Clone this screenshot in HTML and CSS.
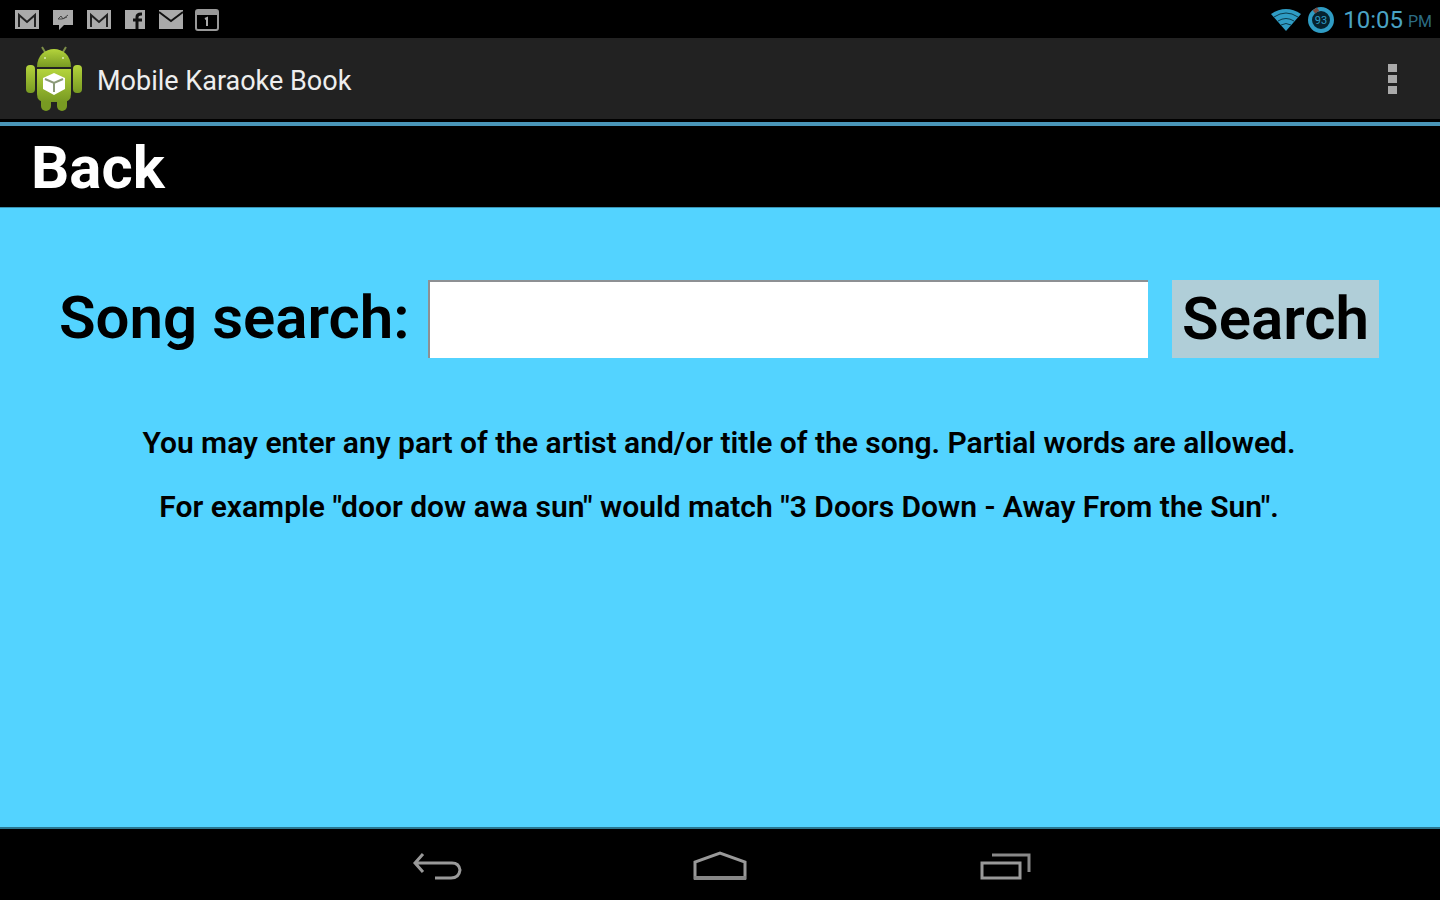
FILE: index.html
```html
<!DOCTYPE html>
<html lang="en">
<head>
  <meta charset="UTF-8">
  <meta name="viewport" content="width=device-width, initial-scale=1.0">
  <title>Mobile Karaoke Book</title>
  <link rel="stylesheet" href="styles.css">
</head>
<body>
  <div class="status-bar">
    <div class="notifications">
      <svg width="26" height="22" viewBox="0 0 26 22">
        <rect x="1" y="1" width="24" height="19" fill="#aaa"/>
        <path d="M5 18V6l8 7 8-7v12" fill="none" stroke="#222" stroke-width="2"/>
      </svg>
      <svg width="26" height="22" viewBox="0 0 26 22">
        <path d="M3 1h20v15h-9l-5 5v-5H3z" fill="#aaa"/>
        <path d="M8 10l3-3 2 3 5-4M8 10h4l5-2" fill="none" stroke="#444" stroke-width="1"/>
      </svg>
      <svg width="26" height="22" viewBox="0 0 26 22">
        <rect x="1" y="1" width="24" height="19" fill="#aaa"/>
        <path d="M5 18V6l8 7 8-7v12" fill="none" stroke="#222" stroke-width="2"/>
      </svg>
      <svg width="26" height="22" viewBox="0 0 26 22">
        <rect x="3" y="1" width="20" height="19" fill="#aaa"/>
        <path d="M15 20V8q0-3 4-3h1M11 11h9" fill="none" stroke="#111" stroke-width="3"/>
      </svg>
      <svg width="26" height="22" viewBox="0 0 26 22">
        <rect x="1" y="1" width="24" height="19" fill="#aaa"/>
        <path d="M1 3l12 9 12-9" fill="none" stroke="#111" stroke-width="2"/>
      </svg>
      <svg width="26" height="22" viewBox="0 0 26 22">
        <rect x="2" y="1" width="22" height="20" rx="2" fill="none" stroke="#999" stroke-width="2"/>
        <path d="M2 4h22" stroke="#999" stroke-width="4"/>
        <path d="M11 10l2-1v8" fill="none" stroke="#aaa" stroke-width="2"/>
      </svg>
    </div>
    <div class="system">
      <svg width="32" height="24" viewBox="0 0 32 24">
        <path d="M1 6Q16-4 31 6L16 23z" fill="#2f9cc4"/>
        <path d="M4 9q12-8 24 0M8 13q8-5 16 0M11 17q5-3 10 0" fill="none" stroke="#0b3a4c" stroke-width="1"/>
      </svg>
      <svg class="battery" width="26" height="26" viewBox="0 0 26 26">
        <circle cx="13" cy="13" r="11" fill="#06222e" stroke="#2f9cc4" stroke-width="4"/>
        <path d="M6 5l4-3" stroke="#7a4a40" stroke-width="4"/>
        <text x="13" y="17" font-size="11" text-anchor="middle" fill="#2f9cc4">93</text>
      </svg>
      <span class="time">10:05</span>
      <span class="meridiem">PM</span>
    </div>
  </div>

  <header class="app-bar">
    <svg width="58" height="66" viewBox="0 0 58 66">
      <defs>
        <linearGradient id="green" x1="0" y1="0" x2="0" y2="1">
          <stop offset="0" stop-color="#b4d43c"/>
          <stop offset="1" stop-color="#789a22"/>
        </linearGradient>
      </defs>
      <path d="M20 6l-3-5M38 6l3-5" stroke="#7d8f48" stroke-width="2"/>
      <rect x="16" y="48" width="10" height="17" rx="5" fill="#789a22"/>
      <rect x="32" y="48" width="10" height="17" rx="5" fill="#789a22"/>
      <rect x="1" y="19" width="9" height="28" rx="4" fill="url(#green)"/>
      <rect x="48" y="19" width="9" height="28" rx="4" fill="url(#green)"/>
      <path d="M12 21C12-3 46-3 46 21z" fill="url(#green)"/>
      <path d="M12 23h34v25q0 8-8 8H20q-8 0-8-8z" fill="url(#green)"/>
      <circle cx="20" cy="12" r="1" fill="#dcebb0"/>
      <circle cx="38" cy="12" r="1" fill="#dcebb0"/>
      <path d="M29 27l11 5v11l-11 6-11-6V32z" fill="#fff"/>
      <path d="M20 33l9 4 9-4M29 37v9" fill="none" stroke="#8c9a78" stroke-width="2"/>
    </svg>
    <h1>Mobile Karaoke Book</h1>
    <button class="overflow" aria-label="More options">
      <svg width="12" height="34" viewBox="0 0 12 34">
        <path d="M1 2h9v8H1zM1 13h9v8H1zM1 24h9v8H1z" fill="#aaa"/>
      </svg>
    </button>
  </header>

  <nav class="back-bar">
    <a href="#">Back</a>
  </nav>

  <main>
    <form class="search">
      <label for="song">Song search:</label>
      <input type="text" id="song" name="song">
      <button type="submit">Search</button>
    </form>
    <p>You may enter any part of the artist and/or title of the song. Partial words are allowed.</p>
    <p>For example "door dow awa sun" would match "3 Doors Down - Away From the Sun".</p>
  </main>

  <footer class="nav-bar">
    <button aria-label="Back">
      <svg width="56" height="34" viewBox="0 0 56 34">
        <path d="M15 4L7 13l8 9M7 13h37q7 0 8 7-1 8-9 8H27" fill="none" stroke="#999" stroke-width="3"/>
      </svg>
    </button>
    <button aria-label="Home">
      <svg width="56" height="34" viewBox="0 0 56 34">
        <path d="M3 28V12L28 3l25 9v16z" fill="none" stroke="#999" stroke-width="3"/>
        <path d="M2 28h52" stroke="#888" stroke-width="4"/>
      </svg>
    </button>
    <button aria-label="Recent apps">
      <svg width="56" height="34" viewBox="0 0 56 34">
        <rect x="6" y="13" width="38" height="15" fill="none" stroke="#999" stroke-width="3"/>
        <path d="M16 5h37v17" fill="none" stroke="#888" stroke-width="3"/>
      </svg>
    </button>
  </footer>
</body>
</html>
```

FILE: styles.css
```css
* {
  box-sizing: border-box;
}

body {
  margin: 0;
  min-height: 100vh;
  display: flex;
  flex-direction: column;
  background: #000;
  color: #000;
  font-family: Roboto, sans-serif;
}

svg {
  display: block;
}

button {
  border: none;
  background: none;
  padding: 0;
  font-family: inherit;
  cursor: pointer;
}

.status-bar {
  height: 38px;
  padding: 1px 8px 0 14px;
  display: flex;
  align-items: center;
  justify-content: space-between;
}

.notifications {
  display: flex;
  gap: 10px;
}

.system {
  display: flex;
  align-items: center;
  color: #4aa3c4;
}

.battery {
  margin: 0 9px 0 6px;
}

.time {
  font-size: 24px;
  margin-right: 5px;
}

.meridiem {
  font-size: 16px;
  color: #2c6c84;
  padding-top: 4px;
}

.app-bar {
  height: 84px;
  padding: 0 41px 0 25px;
  display: flex;
  align-items: center;
  gap: 14px;
  background: #222;
  border-bottom: 3px solid #000;
}

.app-bar h1 {
  margin: 0;
  padding-top: 4px;
  flex: 1;
  font-size: 27px;
  font-weight: 400;
  color: #eee;
}

.back-bar {
  height: 85px;
  padding: 2px 31px 0;
  display: flex;
  align-items: center;
  border-top: 4px solid #4a96b8;
}

.back-bar a {
  color: #fff;
  font-size: 60px;
  font-weight: 700;
  text-decoration: none;
}

main {
  flex: 1;
  padding: 72px 61px 0 59px;
  background: #53d3ff;
  border-top: 1px solid #3a93b2;
  border-bottom: 2px solid #2a7690;
  text-align: center;
}

.search {
  display: flex;
  align-items: stretch;
  height: 78px;
  margin-bottom: 69px;
}

.search label,
.search button {
  font-size: 60px;
  font-weight: 600;
  line-height: 76px;
}

.search label {
  margin-right: 18px;
}

.search input {
  flex: 1;
  min-width: 0;
  margin-right: 24px;
  padding: 0 12px;
  font-family: inherit;
  font-size: 48px;
  border: 0 solid #8d9093;
  border-width: 2px 0 0 2px;
  background: #fff;
}

.search button {
  padding: 0 10px;
  background: #b0ced8;
  color: #000;
}

main p {
  margin: 0 0 32px;
  font-size: 30px;
  font-weight: 600;
  line-height: 32px;
}

.nav-bar {
  height: 71px;
  padding-top: 4px;
  display: flex;
  justify-content: center;
  align-items: center;
  gap: 228px;
}
```
